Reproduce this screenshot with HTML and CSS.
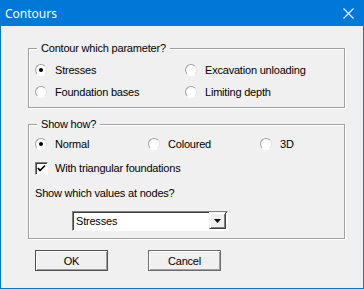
FILE: index.html
```html
<!doctype html>
<html>
	<head>
		<title>Contours</title>
		<meta charset="utf-8" />
		<link rel="stylesheet" href="styles.css">
	</head>
	<body>
		<div class="dialog">
			<div class="titlebar">
				<span class="title">Contours</span>
				<svg class="close" width="11" height="11" viewBox="0 0 11 11"><path d="M0.5 0.5 L10.5 10.5 M10.5 0.5 L0.5 10.5" stroke="#fff" stroke-width="1.1" fill="none"/></svg>
			</div>
			<div class="content">
				<div class="group group-param">
					<span class="legend">Contour which parameter?</span>
					<div class="grid2">
						<label class="opt"><span class="radio on"></span>Stresses</label>
						<label class="opt"><span class="radio"></span>Excavation unloading</label>
						<label class="opt"><span class="radio"></span>Foundation bases</label>
						<label class="opt"><span class="radio"></span>Limiting depth</label>
					</div>
				</div>
				<div class="group group-how">
					<span class="legend">Show how?</span>
					<div class="grid3">
						<label class="opt"><span class="radio on"></span>Normal</label>
						<label class="opt"><span class="radio"></span>Coloured</label>
						<label class="opt"><span class="radio"></span>3D</label>
					</div>
					<label class="opt check-row"><span class="check"><svg width="9" height="9" viewBox="0 0 9 9"><path d="M1 4 L3 6.5 L8 1.5" stroke="#000" stroke-width="1.6" fill="none"/></svg></span>With triangular foundations</label>
					<div class="opt nodes-label">Show which values at nodes?</div>
					<div class="combo">
						<span class="combo-text">Stresses</span>
						<span class="combo-btn"><svg width="7" height="4" viewBox="0 0 7 4"><path d="M0 0 H7 L3.5 4 Z" fill="#000"/></svg></span>
					</div>
				</div>
				<div class="buttons">
					<button class="btn default">OK</button>
					<button class="btn">Cancel</button>
				</div>
			</div>
		</div>
	</body>
</html>
```

FILE: styles.css
```css
* { margin: 0; padding: 0; box-sizing: border-box; }
body { background: #f0f0f0; font-family: "Liberation Sans", Arial, sans-serif; font-size: 11px; letter-spacing: -0.2px; color: #000; }
.dialog { width: 364px; height: 289px; border: 1px solid #0078d7; border-top: none; background: #f0f0f0; }
.titlebar { height: 26px; background: #0078d7; display: flex; align-items: center; justify-content: space-between; padding: 0 10px 0 5px; margin: 0 -1px; }
.title { color: #fff; font-family: "Noto Sans", "Open Sans", sans-serif; font-size: 12px; letter-spacing: 0; }
.close { display: block; }
.content { padding: 22px 18px 0 27px; }
.group { position: relative; border: 1px solid #a0a0a0; box-shadow: 1px 1px 0 #fff, inset 1px 1px 0 #fff; }
.legend { position: absolute; top: -8px; left: 8px; padding: 0 4px; background: #f0f0f0; line-height: 14px; }
.group-param { height: 60px; padding: 10px 0 0 6px; }
.group-how { height: 115px; margin-top: 16px; padding: 8px 0 0 6px; }
.grid2 { display: grid; grid-template-columns: 150px auto; }
.grid3 { display: grid; grid-template-columns: 113px 112px auto; }
.opt { display: flex; align-items: center; height: 22px; white-space: nowrap; }
.radio { width: 12px; height: 12px; border-radius: 50%; margin-right: 8px; background: #fff; border: 1px solid; border-color: #a0a0a0 #e3e3e3 #fff #a0a0a0; display: flex; align-items: center; justify-content: center; }
.radio.on::after { content: ""; width: 4px; height: 4px; border-radius: 50%; background: #000; }
.check-row { margin-top: 2px; }
.check { width: 13px; height: 13px; margin-right: 7px; background: #fff; border: 1px solid; border-color: #808080 #fff #fff #808080; box-shadow: inset 1px 1px 0 #404040; display: flex; align-items: center; justify-content: center; }
.nodes-label { margin-top: 3px; }
.combo { margin: 7px 0 0 37px; width: 156px; height: 20px; display: flex; align-items: center; justify-content: space-between; background: #fff; border: 1px solid; border-color: #808080 #fff #fff #808080; box-shadow: inset 1px 1px 0 #404040; padding: 0 1px 0 3px; }
.combo-btn { width: 17px; height: 17px; background: #f0f0f0; border: 1px solid; border-color: #f0f0f0 #404040 #404040 #f0f0f0; box-shadow: inset 1px 1px 0 #fff, inset -1px -1px 0 #808080; display: flex; align-items: center; justify-content: center; margin-top: -1px; }
.combo-btn svg { display: block; }
.buttons { display: flex; gap: 40px; margin: 11px 0 0 7px; }
.btn { width: 73px; height: 21px; font-family: inherit; font-size: 11px; letter-spacing: -0.2px; background: #f0f0f0; border: 1px solid #6d6d6d; box-shadow: inset 1px 1px 0 #fff, inset -1px -1px 0 #a0a0a0; }
.btn.default { border-color: #505050; }
```
